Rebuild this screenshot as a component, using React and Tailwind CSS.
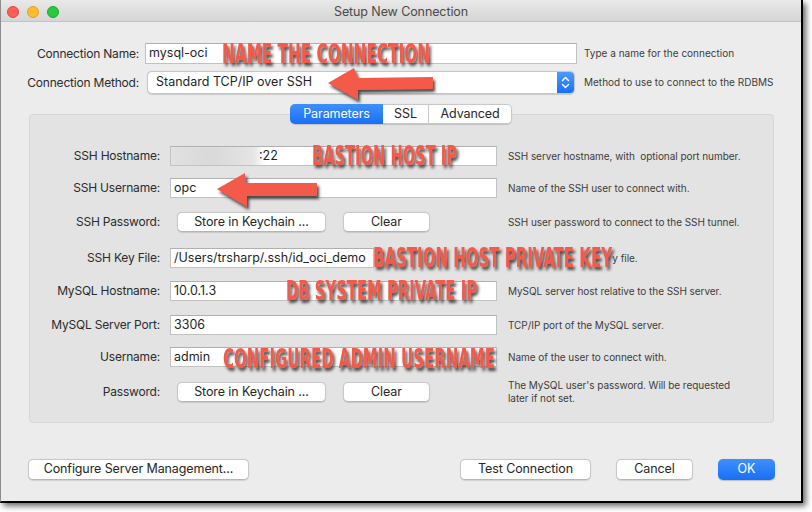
import React from "react";

const FONT = { fontFamily: "Inter, 'Liberation Sans', sans-serif" };

function Btn({ children, w, className = "" }) {
  return (
    <div
      className={`h-[21px] ${w} flex items-center justify-center bg-white border border-[#c8c8c8] border-b-[#b5b5b5] rounded-[5px] shadow-[0_0.5px_1px_rgba(0,0,0,0.12)] text-[12.5px] text-[#262626] tracking-[-0.1px] ${className}`}
    >
      {children}
    </div>
  );
}

function SmallBtn({ children, w }) {
  return (
    <div
      className={`h-[20px] ${w} flex items-center justify-center bg-white border border-[#c8c8c8] border-b-[#b5b5b5] rounded-[5px] shadow-[0_0.5px_1px_rgba(0,0,0,0.12)] text-[12.5px] text-[#262626] tracking-[-0.1px]`}
    >
      {children}
    </div>
  );
}

function Input({ value, w = "w-[327px]", children }) {
  return (
    <div
      className={`relative h-[20px] ${w} bg-white border border-[#c2c2c2] border-t-[#b0b0b0] flex items-center px-[3px] text-[12.5px] text-[#1f1f1f] overflow-hidden`}
    >
      {children}
      <span className="relative">{value}</span>
    </div>
  );
}

function Row({ label, children, hint, mt }) {
  return (
    <div className={`flex items-center h-[20px] ${mt}`}>
      <div className="w-[130px] text-right text-[12px] tracking-[-0.2px] text-[#2b2b2b]">
        {label}
      </div>
      <div className="ml-[10px] w-[338px] flex items-center">{children}</div>
      <div className="text-[10px] leading-[13px] tracking-[-0.05px] text-[#3c3c3c] whitespace-pre">
        {hint}
      </div>
    </div>
  );
}

function Annotations() {
  const ann = [
    { t: "NAME THE CONNECTION", x: 222, y: 63, w: 208 },
    { t: "BASTION HOST IP", x: 312, y: 165, w: 145 },
    { t: "BASTION HOST PRIVATE KEY", x: 373, y: 267, w: 239 },
    { t: "DB SYSTEM PRIVATE IP", x: 286, y: 300, w: 191 },
    { t: "CONFIGURED ADMIN USERNAME", x: 223, y: 368, w: 272 },
  ];
  return (
    <svg
      className="absolute left-0 top-0 pointer-events-none"
      width="812"
      height="512"
      viewBox="0 0 812 512"
    >
      <defs>
        <filter id="sh" x="-10%" y="-30%" width="130%" height="180%">
          <feDropShadow dx="2" dy="3" stdDeviation="1.6" floodColor="#2a2a2a" floodOpacity="0.85" />
        </filter>
      </defs>
      <rect x="504" y="246" width="108" height="20" fill="#e3e3e3" />
      <g filter="url(#sh)" fill="#f35a4a">
        <polygon points="328,83 354,68 358,78 433,77 433,89 358,90 358,100" />
        <polygon points="217,189 245,173 246,183 317,183 317,196 247,196 247,207" />
        {ann.map((a) => (
          <text
            key={a.t}
            x={a.x}
            y={a.y}
            textLength={a.w}
            lengthAdjust="spacingAndGlyphs"
            fontSize="26.5"
            fontWeight="bold"
            fontFamily="'DejaVu Sans Condensed', 'DejaVu Sans', sans-serif"
          >
            {a.t}
          </text>
        ))}
      </g>
    </svg>
  );
}

export default function App() {
  return (
    <div className="relative w-[812px] h-[512px] bg-white overflow-hidden" style={FONT}>
      <div className="w-[803px] h-[503px] bg-[#ececec] border-l border-l-[#8e8e8e] border-r-2 border-r-black border-b-2 border-b-black shadow-[3px_3px_6px_rgba(0,0,0,0.6)] flex flex-col">
        {/* Title bar */}
        <div className="h-[22px] shrink-0 pt-[2px] grid grid-cols-[1fr_auto_1fr] items-center bg-gradient-to-b from-[#e9e9e9] to-[#d5d5d5] border-b border-[#c3c3c3]">
          <div className="flex items-center gap-[8px] ml-[6px]">
            <div className="w-[12px] h-[12px] rounded-full bg-[#fe5f57] border border-[#e2463f]" />
            <div className="w-[12px] h-[12px] rounded-full bg-[#febc2e] border border-[#dea123]" />
            <div className="w-[12px] h-[12px] rounded-full bg-[#28c840] border border-[#1aab29]" />
          </div>
          <div className="text-[12.5px] leading-[16px] text-[#4a4a4a] tracking-[-0.1px]">Setup New Connection</div>
          <div />
        </div>

        {/* Connection name */}
        <div className="flex items-center h-[21px] mt-[21px]">
          <div className="w-[138px] text-right text-[12px] tracking-[-0.2px] text-[#2b2b2b]">
            Connection Name:
          </div>
          <div className="ml-[6px] w-[432px] h-[21px] bg-white border border-[#c2c2c2] border-t-[#b0b0b0] flex items-center px-[3px] text-[12.5px] text-[#1f1f1f]">
            mysql-oci
          </div>
          <div className="ml-[7px] text-[10px] text-[#3c3c3c]">Type a name for the connection</div>
        </div>

        {/* Connection method */}
        <div className="flex items-center h-[23px] mt-[7px]">
          <div className="w-[138px] text-right text-[12px] tracking-[-0.2px] text-[#2b2b2b]">
            Connection Method:
          </div>
          <div className="ml-[8px] w-[428px] h-[23px] flex bg-white border border-[#c6c6c6] rounded-[5px] shadow-[0_0.5px_1px_rgba(0,0,0,0.15)] overflow-hidden">
            <div className="flex-1 flex items-center pl-[8px] text-[12.5px] text-[#1f1f1f]">
              Standard TCP/IP over SSH
            </div>
            <div className="w-[17px] bg-gradient-to-b from-[#4d9bfb] to-[#1670f5] flex items-center justify-center">
              <svg width="9" height="13" viewBox="0 0 9 13" fill="none" stroke="white" strokeWidth="1.4" strokeLinecap="round" strokeLinejoin="round">
                <path d="M1.5 4.5 L4.5 1.5 L7.5 4.5" />
                <path d="M1.5 8.5 L4.5 11.5 L7.5 8.5" />
              </svg>
            </div>
          </div>
          <div className="ml-[9px] text-[10px] text-[#3c3c3c]">Method to use to connect to the RDBMS</div>
        </div>

        {/* Tabs */}
        <div className="relative z-10 flex justify-center mt-[10px] h-[20px]">
          <div className="flex h-[20px] text-[12.5px] tracking-[-0.1px] shadow-[0_0.5px_1px_rgba(0,0,0,0.15)] rounded-[5px]">
            <div className="w-[93px] flex items-center justify-center rounded-l-[5px] bg-gradient-to-b from-[#3f8ffa] to-[#176ff6] text-white">
              Parameters
            </div>
            <div className="w-[46px] flex items-center justify-center bg-white border-y border-[#c8c8c8] border-r text-[#262626]">
              SSL
            </div>
            <div className="w-[83px] flex items-center justify-center bg-white border-y border-r border-[#c8c8c8] rounded-r-[5px] text-[#262626]">
              Advanced
            </div>
          </div>
        </div>

        {/* Group box */}
        <div className="-mt-[10px] ml-[28px] w-[745px] h-[309px] bg-[#e3e3e3] border border-[#d6d6d6] rounded-[4px] flex flex-col">
          <Row label="SSH Hostname:" hint="SSH server hostname, with  optional port number." mt="mt-[31px]">
            <Input value=":22">
              <div className="absolute left-[-6px] top-[-6px] w-[94px] h-[32px] bg-gradient-to-r from-[#e2e2e2] via-[#d9d9d9] to-[#e6e6e6] blur-[4px]" />
              <span className="w-[85px] shrink-0" />
            </Input>
          </Row>
          <Row label="SSH Username:" hint="Name of the SSH user to connect with." mt="mt-[12px]">
            <Input value="opc" />
          </Row>
          <Row label="SSH Password:" hint="SSH user password to connect to the SSH tunnel." mt="mt-[14px]">
            <div className="ml-[7px] flex gap-[17px]">
              <SmallBtn w="w-[149px]">Store in Keychain ...</SmallBtn>
              <SmallBtn w="w-[87px]">Clear</SmallBtn>
            </div>
          </Row>
          <Row label="SSH Key File:" hint="Path to SSH private key file." mt="mt-[16px]">
            <Input value="/Users/trsharp/.ssh/id_oci_demo" w="w-[204px]" />
          </Row>
          <Row label="MySQL Hostname:" hint="MySQL server host relative to the SSH server." mt="mt-[13px]">
            <Input value="10.0.1.3" />
          </Row>
          <Row label="MySQL Server Port:" hint="TCP/IP port of the MySQL server." mt="mt-[14px]">
            <Input value="3306" />
          </Row>
          <Row label="Username:" hint="Name of the user to connect with." mt="mt-[12px]">
            <Input value="admin" />
          </Row>
          <Row
            label="Password:"
            hint={"The MySQL user's password. Will be requested\nlater if not set."}
            mt="mt-[15px]"
          >
            <div className="ml-[7px] flex gap-[17px]">
              <SmallBtn w="w-[149px]">Store in Keychain ...</SmallBtn>
              <SmallBtn w="w-[87px]">Clear</SmallBtn>
            </div>
          </Row>
        </div>

        {/* Bottom buttons */}
        <div className="flex items-center mt-[36px] ml-[27px] mr-[26px]">
          <Btn w="w-[221px]">Configure Server Management...</Btn>
          <div className="flex-1" />
          <Btn w="w-[131px]">Test Connection</Btn>
          <Btn w="w-[77px]" className="ml-[25px]">Cancel</Btn>
          <div className="ml-[25px] w-[57px] h-[21px] flex items-center justify-center rounded-[5px] bg-gradient-to-b from-[#3f8ffa] to-[#176ff6] text-white text-[12.5px] shadow-[0_0.5px_1px_rgba(0,0,0,0.2)]">
            OK
          </div>
        </div>
      </div>
      <Annotations />
    </div>
  );
}
